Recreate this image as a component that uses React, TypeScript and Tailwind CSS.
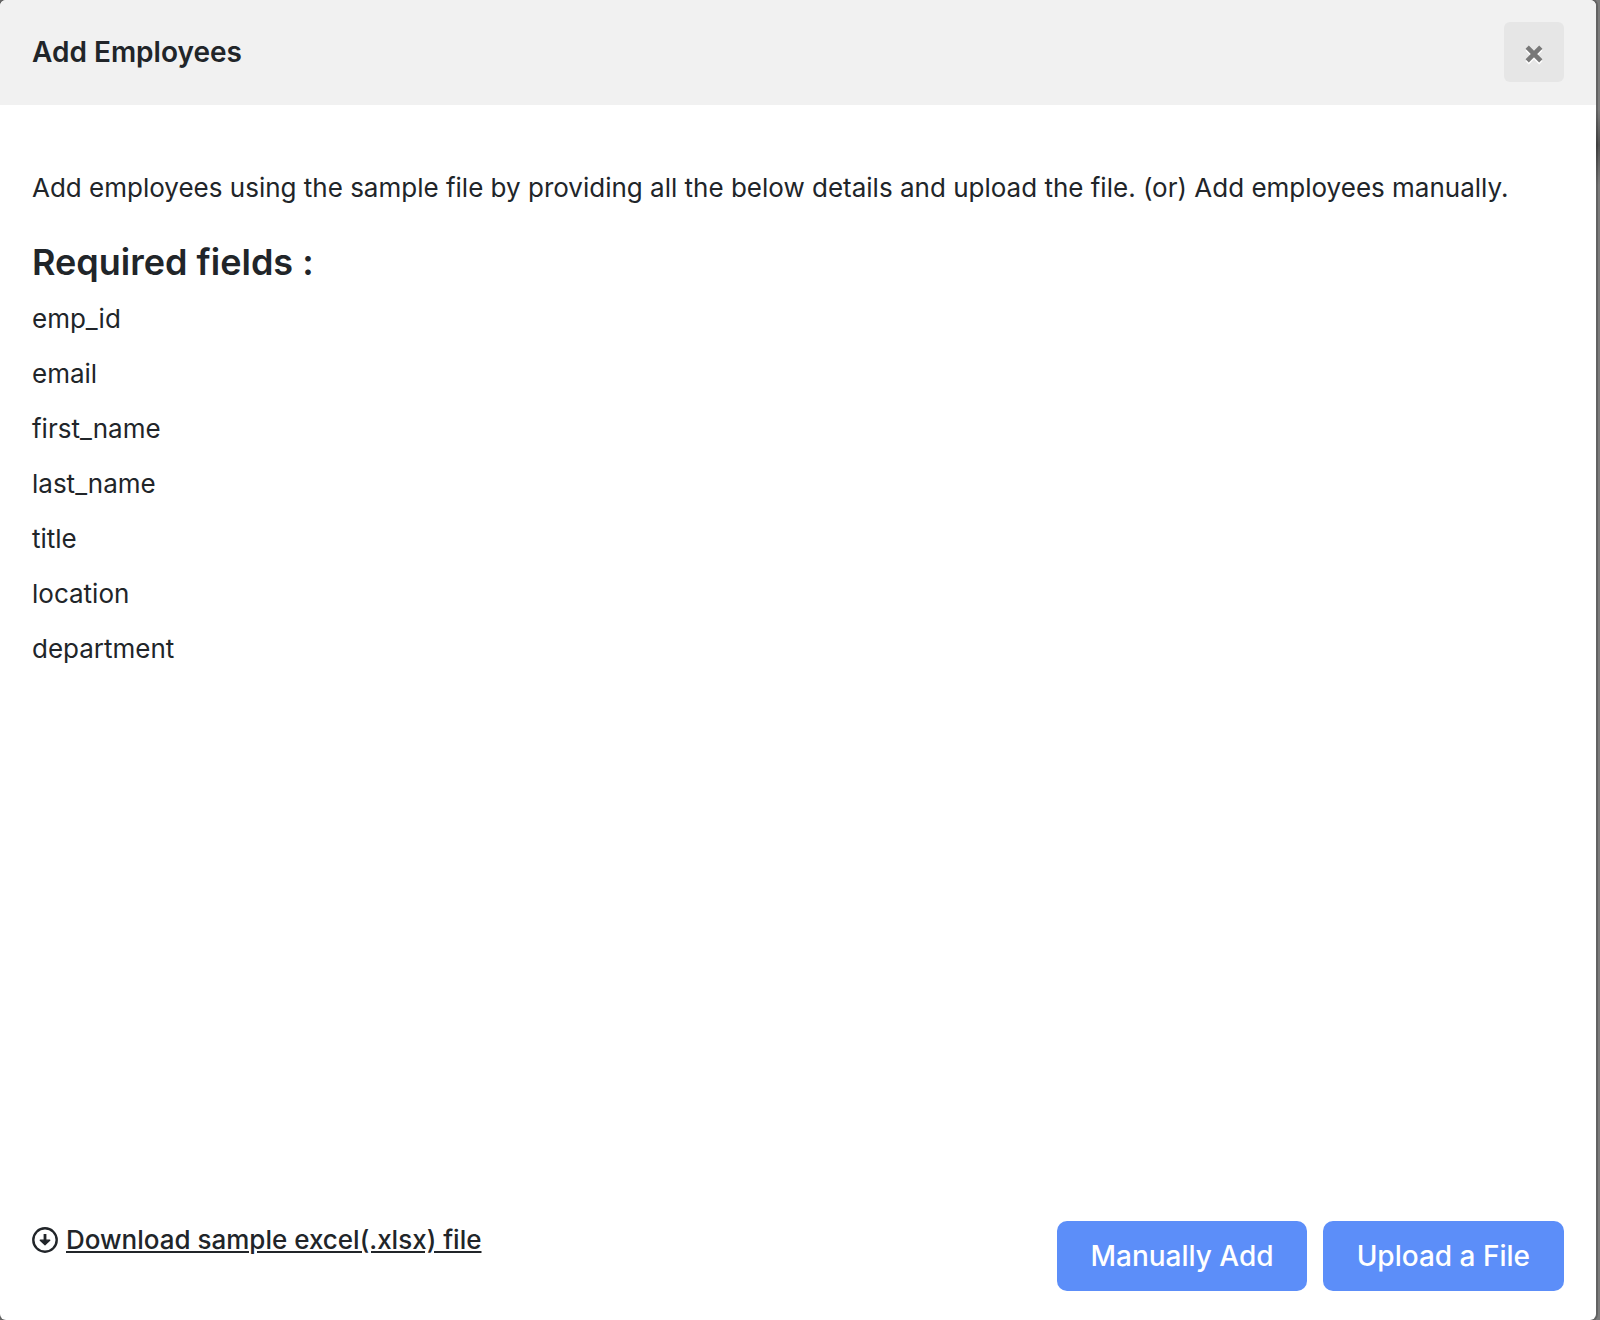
const requiredFields = [
  "emp_id",
  "email",
  "first_name",
  "last_name",
  "title",
  "location",
  "department",
];

const CloseIcon = () => (
  <svg
    viewBox="0 0 18 18"
    className="mt-[3px] size-[18px] drop-shadow-[0_2px_0_#fff]"
    fill="none"
    stroke="currentColor"
    strokeWidth="4.6"
    aria-hidden="true"
  >
    <path d="M2.2 2.2l13.6 13.6M15.8 2.2L2.2 15.8" />
  </svg>
);

const DownloadIcon = () => (
  <svg
    viewBox="0 0 26 26"
    className="size-[26px]"
    fill="none"
    stroke="currentColor"
    strokeWidth="2.4"
    aria-hidden="true"
  >
    <circle cx="13" cy="13" r="11.7" />
    <path d="M13 7v8" strokeWidth="2.8" />
    <path
      d="M8.2 13.2h9.6L13 17.8z"
      fill="currentColor"
      strokeWidth="1.2"
      strokeLinejoin="round"
    />
  </svg>
);

const App = () => {
  return (
    <div className="min-h-screen bg-[linear-gradient(#7b7b7b_110px,#505050_145px,#7b7b7b_185px)] pr-1 font-['Inter',sans-serif] text-[#212529]">
      <div className="flex min-h-screen flex-col overflow-hidden rounded-md bg-white shadow-[0_0_0_2px_rgba(0,0,0,0.2)]">
        <header className="flex items-center justify-between bg-[#f1f1f1] px-8 pt-[22px] pb-[23px]">
          <h1 className="text-[28px] font-semibold">Add Employees</h1>
          <button
            type="button"
            aria-label="Close"
            className="flex size-[60px] items-center justify-center rounded-md bg-[#e6e6e6] text-[#787878]"
          >
            <CloseIcon />
          </button>
        </header>

        <main className="flex-1 px-8 pt-[63px]">
          <p className="text-[26px] leading-10">
            Add employees using the sample file by providing all the below
            details and upload the file. (or) Add employees manually.
          </p>
          <h2 className="mt-8 text-[36px] leading-[44px] font-semibold">
            Required fields :
          </h2>
          <ul className="mt-[15px] flex flex-col gap-4">
            {requiredFields.map((field) => (
              <li key={field} className="text-[26px] leading-[39px]">
                {field}
              </li>
            ))}
          </ul>
        </main>

        <footer className="flex items-start justify-between px-8 pb-[29px]">
          <a href="#sample" className="flex items-center gap-2">
            <DownloadIcon />
            <span className="text-[26px] leading-[38px] font-medium underline">
              Download sample excel(.xlsx) file
            </span>
          </a>
          <div className="flex gap-4">
            <button
              type="button"
              className="h-[70px] rounded-[10px] bg-[#5c8ef9] px-[33px] text-[28px] font-medium text-white"
            >
              Manually Add
            </button>
            <button
              type="button"
              className="h-[70px] rounded-[10px] bg-[#5c8ef9] px-[34px] text-[28px] font-medium text-white"
            >
              Upload a File
            </button>
          </div>
        </footer>
      </div>
    </div>
  );
};

export default App;
